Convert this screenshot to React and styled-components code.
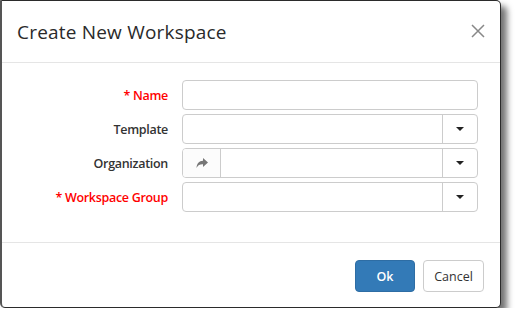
import styled, { createGlobalStyle } from "styled-components";

const Global = createGlobalStyle`
  body {
    margin: 0;
    background: #ffffff;
    font-family: "Open Sans", "Noto Sans", sans-serif;
  }
`;

const Dialog = styled.div`
  width: 498px;
  height: 306px;
  background: #fff;
  border: 1px solid #2b2b2b;
  border-left: 2px solid #555;
  border-radius: 0 5px 5px 5px;
  box-shadow: 6px 6px 6px rgba(0, 0, 0, 0.55);
  display: flex;
  flex-direction: column;
`;

const Header = styled.div`
  height: 61px;
  border-bottom: 1px solid #e5e5e5;
  display: flex;
  align-items: center;
  justify-content: space-between;
  padding: 0 14px 0 15px;
`;

const Title = styled.div`
  font-size: 19px;
  color: #2a2a2a;
  letter-spacing: 0.2px;
`;

const Close = styled.div`
  width: 16px;
  height: 16px;
  display: flex;
  margin-top: -1px;
`;

const Body = styled.div`
  height: 162px;
  border-bottom: 1px solid #e5e5e5;
  padding-top: 17px;
  display: flex;
  flex-direction: column;
  gap: 4px;
`;

const Row = styled.div`
  display: grid;
  grid-template-columns: 166px 296px;
  column-gap: 14px;
  align-items: center;
`;

const Label = styled.label`
  text-align: right;
  font-size: 12.5px;
  font-weight: 600;
  letter-spacing: -0.3px;
  color: ${(p) => (p.required ? "#ff0000" : "#333")};
`;

const Group = styled.div`
  display: flex;
  height: 30px;
  border: 1px solid #ccc;
  border-radius: 4px;
  box-sizing: border-box;
  overflow: hidden;
`;

const Field = styled.div`
  flex: 1;
`;

const Addon = styled.div`
  width: 37px;
  border-right: 1px solid #ccc;
  background: #fcfcfc;
  display: flex;
  align-items: center;
  justify-content: center;
`;

const Caret = styled.div`
  width: 34px;
  border-left: 1px solid #ccc;
  display: flex;
  align-items: center;
  justify-content: center;
  &::after {
    content: "";
    border-left: 4px solid transparent;
    border-right: 4px solid transparent;
    border-top: 4px solid #222;
  }
`;

const Footer = styled.div`
  flex: 1;
  display: flex;
  justify-content: flex-end;
  align-items: flex-start;
  padding: 17px 16px 0 0;
  gap: 8px;
`;

const Button = styled.button`
  height: 32px;
  padding: 0;
  width: ${(p) => (p.primary ? "60px" : "61px")};
  border-radius: 4px;
  font-family: inherit;
  font-size: 12.5px;
  border: 1px solid ${(p) => (p.primary ? "#2e6da4" : "#ccc")};
  background: ${(p) => (p.primary ? "#337ab7" : "#fff")};
  color: ${(p) => (p.primary ? "#fff" : "#333")};
  font-weight: ${(p) => (p.primary ? 600 : 400)};
`;

const Share = () => (
  <svg width="12" height="11" viewBox="0 0 12 11">
    <path d="M7 0 L12 4.5 L7 9 L7 6.3 C4 6.2 2 7 0.5 10 C0.8 5.5 3 3 7 2.8 Z" fill="#777" />
  </svg>
);

export default function App() {
  return (
    <>
      <Global />
      <Dialog>
        <Header>
          <Title>Create New Workspace</Title>
          <Close>
            <svg width="16" height="16" viewBox="0 0 16 16">
              <path d="M2 2 L14 14 M14 2 L2 14" stroke="#888" strokeWidth="1.5" />
            </svg>
          </Close>
        </Header>
        <Body>
          <Row>
            <Label required>* Name</Label>
            <Group>
              <Field />
            </Group>
          </Row>
          <Row>
            <Label>Template</Label>
            <Group>
              <Field />
              <Caret />
            </Group>
          </Row>
          <Row>
            <Label>Organization</Label>
            <Group>
              <Addon>
                <Share />
              </Addon>
              <Field />
              <Caret />
            </Group>
          </Row>
          <Row>
            <Label required>* Workspace Group</Label>
            <Group>
              <Field />
              <Caret />
            </Group>
          </Row>
        </Body>
        <Footer>
          <Button primary>Ok</Button>
          <Button>Cancel</Button>
        </Footer>
      </Dialog>
    </>
  );
}
